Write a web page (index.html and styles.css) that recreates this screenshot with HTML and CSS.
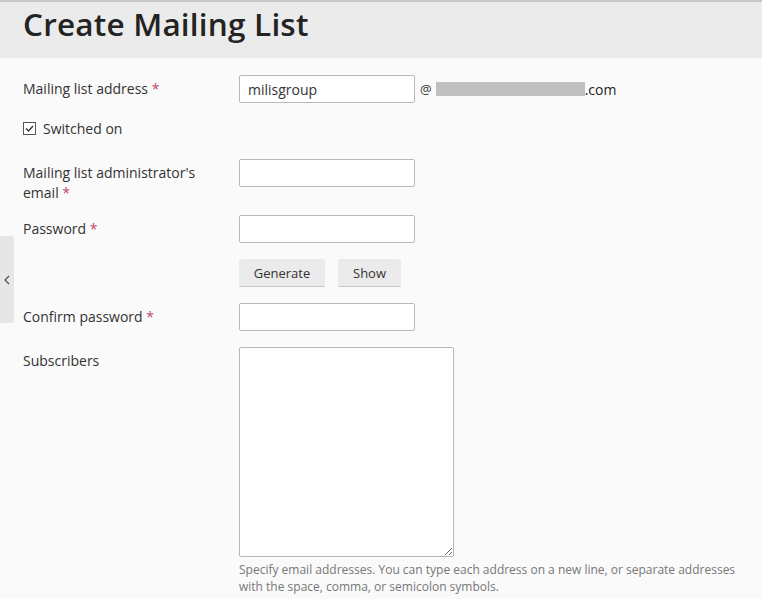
FILE: index.html
```html
<!DOCTYPE html>
<html lang="en">
<head>
<meta charset="utf-8">
<title>Create Mailing List</title>
<link rel="stylesheet" href="styles.css">
</head>
<body>
<div class="page">
  <header class="page-header">
    <h1 class="page-title">Create Mailing List</h1>
  </header>
  <button class="side-toggle" type="button" aria-label="Toggle sidebar">
    <svg width="6" height="10" viewBox="0 0 6 10"><path d="M5 1 L1 5 L5 9" fill="none" stroke="#444" stroke-width="1.1"/></svg>
  </button>
  <form class="form">
    <div class="row">
      <label class="label">Mailing list address <span class="req">*</span></label>
      <div class="field field-inline">
        <input class="input" type="text" value="milisgroup">
        <span class="at">@</span>
        <span class="redact"></span>
        <span class="domain">.com</span>
      </div>
    </div>
    <div class="row row-check">
      <label class="check"><span class="box"><svg width="11" height="11" viewBox="0 0 11 11"><path d="M2 5.5 L4.5 8 L9 3" fill="none" stroke="#333" stroke-width="1.3"/></svg></span>Switched on</label>
    </div>
    <div class="row row-tall">
      <label class="label">Mailing list administrator's email <span class="req">*</span></label>
      <div class="field"><input class="input" type="text"></div>
    </div>
    <div class="row">
      <label class="label">Password <span class="req">*</span></label>
      <div class="field"><input class="input" type="password"></div>
    </div>
    <div class="row">
      <span class="label"></span>
      <div class="field buttons">
        <button class="btn btn-gen" type="button">Generate</button>
        <button class="btn btn-show" type="button">Show</button>
      </div>
    </div>
    <div class="row">
      <label class="label">Confirm password <span class="req">*</span></label>
      <div class="field"><input class="input" type="password"></div>
    </div>
    <div class="row">
      <label class="label">Subscribers</label>
      <div class="field">
        <textarea class="textarea"></textarea>
        <p class="hint">Specify email addresses. You can type each address on a new line, or separate addresses with the space, comma, or semicolon symbols.</p>
      </div>
    </div>
  </form>
</div>
</body>
</html>
```

FILE: styles.css
```css
* { box-sizing: border-box; }
html, body { margin: 0; padding: 0; }
body {
  background: #fafafa;
  font-family: "Open Sans", "Liberation Sans", sans-serif;
  color: #333;
  font-size: 14px;
  width: 762px;
  height: 599px;
  overflow: hidden;
}
.page { position: relative; }
.page-header {
  background: #ebebeb;
  border-top: 2px solid #c8c8c8;
  height: 58px;
  padding: 0 0 0 23px;
}
.page-title {
  margin: 0;
  font-size: 31.5px;
  font-weight: 600;
  color: #232323;
  line-height: 44px;
  letter-spacing: 0.2px;
}
.side-toggle {
  position: absolute;
  left: 0;
  top: 236px;
  width: 14px;
  height: 87px;
  border: 0;
  padding: 0;
  background: #e6e6e6;
  border-radius: 0 3px 3px 0;
  display: flex;
  align-items: center;
  justify-content: center;
}
.form {
  padding: 17px 0 0 23px;
  display: flex;
  flex-direction: column;
  gap: 16px;
}
.row {
  display: grid;
  grid-template-columns: 216px 1fr;
  align-items: start;
}
.label {
  padding-top: 4px;
  line-height: 20px;
  color: #333;
  width: 190px;
}
.req { color: #c2476c; }
.row-tall { margin-bottom: -4px; }
.row-check { display: block; margin-bottom: 4px; }
.check {
  display: flex;
  align-items: center;
  line-height: 20px;
}
.box {
  width: 13px;
  height: 13px;
  border: 1px solid #555;
  background: #fff;
  margin-right: 7px;
  display: flex;
  align-items: center;
  justify-content: center;
  margin-top: -1px;
}
.field-inline { display: flex; align-items: center; }
.input {
  width: 176px;
  height: 28px;
  border: 1px solid #b8b8b8;
  border-radius: 2px;
  background: #fff;
  padding: 0 8px;
  font-family: inherit;
  font-size: 14px;
  color: #333;
  display: block;
}
.at { margin-left: 5px; font-size: 13px; color: #333; }
.redact {
  display: inline-block;
  width: 149px;
  height: 14px;
  background: #c0c0c0;
  margin-left: 4px;
}
.domain { font-weight: 500; color: #222; font-size: 14px; }
.buttons { display: flex; gap: 13px; }
.btn {
  height: 28px;
  border: 0;
  border-bottom: 1px solid #c9c9c9;
  background: #ebebeb;
  border-radius: 2px;
  font-family: inherit;
  font-size: 13px;
  color: #333;
  padding: 0;
}
.btn-gen { width: 86px; }
.btn-show { width: 63px; }
.textarea {
  display: block;
  width: 215px;
  height: 210px;
  border: 1px solid #b8b8b8;
  border-radius: 2px;
  background: #fff;
  resize: both;
  font-family: inherit;
}
.hint {
  margin: 4px 0 0;
  font-size: 12px;
  line-height: 17px;
  color: #777;
  max-width: 505px;
}
```
